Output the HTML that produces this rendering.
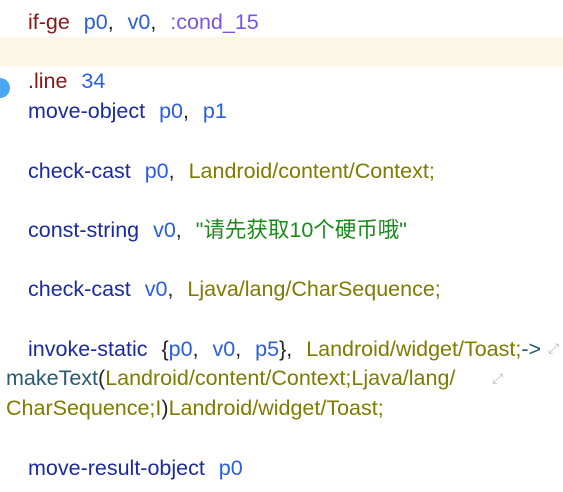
<!DOCTYPE html><html><head><meta charset="utf-8"><style>
body{margin:0;width:563px;height:492px;background:#fff;overflow:hidden;position:relative;font-family:"Liberation Sans","Noto Sans CJK SC",sans-serif;font-size:21.5px}
.r{position:absolute;left:0;height:29.7px;line-height:29.7px;white-space:pre;width:600px;word-spacing:1px}
.k{color:#8b1515}.rg{color:#2a5ee0}.lb{color:#7a55e0}.op{color:#1a2aa0}.t{color:#7f7a00}.s{color:#1a8a1a}.m{color:#255a70}.p{color:#222}
.w{color:#bbb;font-size:14px;position:absolute}
</style></head><body>
<div style="position:absolute;left:0;top:37px;width:563px;height:29px;background:#fdf8e6"></div>
<div style="position:absolute;left:-10px;top:78px;width:20px;height:20px;border-radius:50%;background:#4aa8f2"></div>
<div class="r" style="top:8px;left:28px"><span class="k">if-ge</span>  <span class="rg">p0</span><span class="p">,</span>  <span class="rg">v0</span><span class="p">,</span>  <span class="lb">:cond_15</span></div>
<div class="r" style="top:67.4px;left:28px"><span class="k">.line</span>  <span class="rg">34</span></div>
<div class="r" style="top:97.1px;left:28px"><span class="op">move-object</span>  <span class="rg">p0</span><span class="p">,</span>  <span class="rg">p1</span></div>
<div class="r" style="top:156.5px;left:28px"><span class="op">check-cast</span>  <span class="rg">p0</span><span class="p">,</span>  <span class="t">Landroid/content/Context;</span></div>
<div class="r" style="top:215.9px;left:28px"><span class="op">const-string</span>  <span class="rg">v0</span><span class="p">,</span>  <span class="s">"请先获取10个硬币哦"</span></div>
<div class="r" style="top:275.3px;left:28px"><span class="op">check-cast</span>  <span class="rg">v0</span><span class="p">,</span>  <span class="t">Ljava/lang/CharSequence;</span></div>
<div class="r" style="top:334.7px;left:28px"><span class="op">invoke-static</span>  <span class="p">{</span><span class="rg">p0</span><span class="p">,</span>  <span class="rg">v0</span><span class="p">,</span>  <span class="rg">p5</span><span class="p">},</span>  <span class="t">Landroid/widget/Toast;</span><span class="m">-&gt;</span></div>
<span class="w" style="left:548px;top:340px">⤢</span>
<div class="r" style="top:364.4px;left:6px;word-spacing:0"><span class="m">makeText</span><span class="p">(</span><span class="t">Landroid/content/Context;Ljava/lang/</span></div>
<span class="w" style="left:492px;top:370px">⤢</span>
<div class="r" style="top:394.1px;left:6px;word-spacing:0"><span class="t">CharSequence;I</span><span class="p">)</span><span class="t">Landroid/widget/Toast;</span></div>
<div class="r" style="top:453.5px;left:28px"><span class="op">move-result-object</span>  <span class="rg">p0</span></div>
</body></html>
